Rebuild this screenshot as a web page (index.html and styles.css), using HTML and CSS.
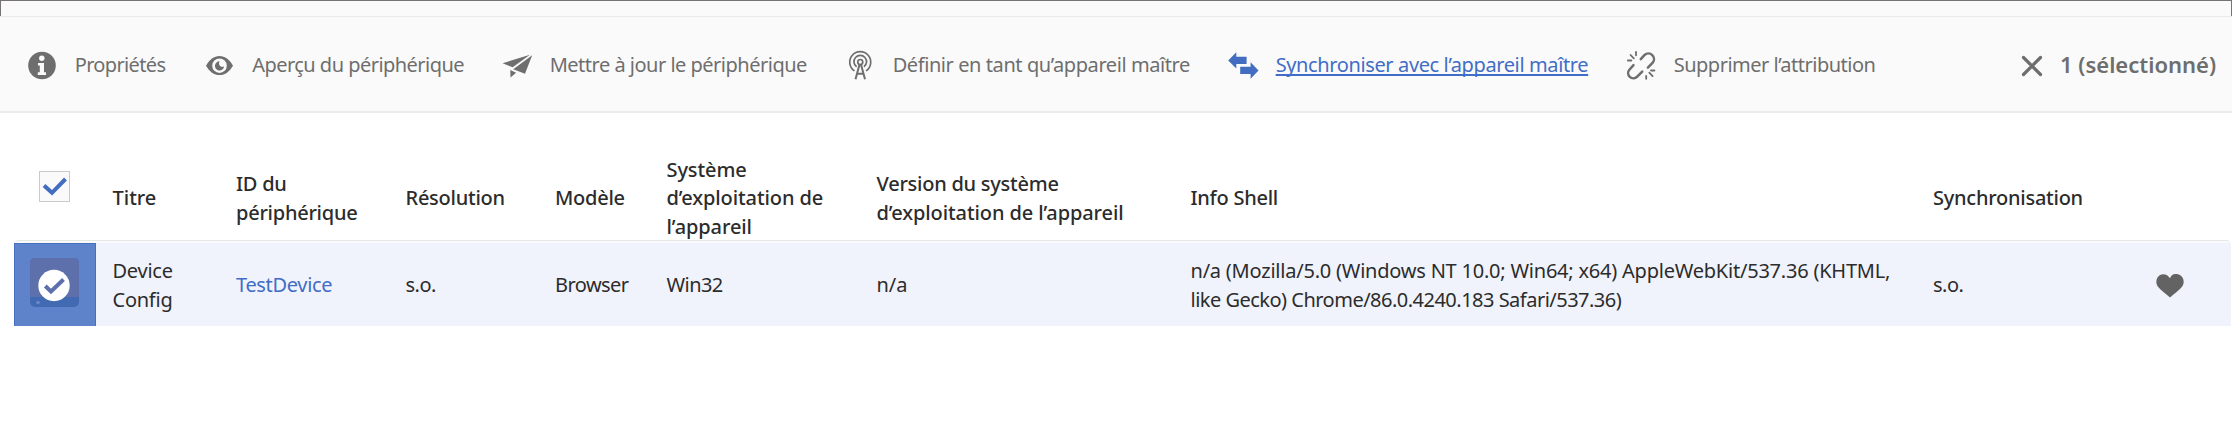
FILE: index.html
```html
<!DOCTYPE html>
<html lang="fr">
<head>
<meta charset="utf-8">
<title>Périphériques</title>
<link rel="stylesheet" href="styles.css">
</head>
<body>
<div class="top-strip"></div>
<nav class="toolbar">
  <a class="action"><svg class="icon" viewBox="28 49 32 32"><circle cx="42" cy="66.5" r="13.8"/><g fill="#fafafa"><circle cx="41.8" cy="59.3" r="2.7"/><path d="M38 64h6v9.200h2V76h-8.200v-2.800h2V66.600H38z"/></g></svg><span class="label t1">Propriétés</span></a>
  <a class="action"><svg class="icon" viewBox="205.500 49 32 32"><path fill-rule="evenodd" d="M205.500 66.700C209 60.500 213.500 57 219 57s10 3.500 13.500 9.700C229 72.700 224.500 76 219 76s-10-3.300-13.500-9.300zM219 59.400a7.300 7.300 0 1 0 0 14.600A7.300 7.300 0 0 0 219 59.400z"/><path d="M219.300 62.300a4.600 4.600 0 1 0 4.300 5.200c-2 .8-4.600-.2-5-2.300-.2-1.200.1-2.100.7-2.900z"/></svg><span class="label t2">Aperçu du périphérique</span></a>
  <a class="action"><svg class="icon" viewBox="503 49 32 32"><path d="M502.600 64.300 530 55.800l-17.300 12.400z"/><path d="M532.200 56.300 525 74.800l-11.800-4.600zM510.300 71l5.800 2.700-5.600 4.700z"/></svg><span class="label t3">Mettre à jour le périphérique</span></a>
  <a class="action"><svg class="icon" viewBox="846 49 32 32"><g fill="none" stroke="#6e6e6e" stroke-width="1.700"><path d="M854.500 71.900a10.500 10.500 0 1 1 11.500 0"/><path d="M856.600 67.800a6.300 6.300 0 1 1 7.300 0"/><circle cx="860.250" cy="63" r="2.500"/><path stroke-width="2" d="M859.500 65.500 855.500 80.300M861 65.500l4 14.800M857.300 74.800h6"/></g></svg><span class="label t4">Définir en tant qu’appareil maître</span></a>
  <a class="action active"><svg class="icon" viewBox="1229 49 32 32"><path d="M1228.200 61.500l8.100-8.200v4.400h10.300v7.300h-10.300v4.600zM1258.500 71.500l-7.900-8.200v4.400h-10.400V75h10.400v4.700z"/></svg><span class="label t5">Synchroniser avec l’appareil maître</span></a>
  <a class="action"><svg class="icon" viewBox="1627 49 32 32"><g fill="none" stroke="#6e6e6e" stroke-width="2.500" stroke-linecap="round"><path d="M1640.800 60.200l3.800-4.200a5.600 5.600 0 0 1 8.100 7.700l-4.800 4.900"/><path d="M1633.500 66.200l-3.900 4.300a5.200 5.200 0 0 0 7.600 7.200l5-5"/><g stroke-width="1.800"><path d="M1636 53v3.300M1630.600 56l3.200 3.400M1627.900 61.500h3.400M1646.200 76.800v3M1649.300 73.600l3.300 3.500M1651 71.500h3.400"/></g></g></svg><span class="label t6">Supprimer l’attribution</span></a>
  <a class="action selection"><svg class="icon" viewBox="2020 49 32 32"><path fill="none" stroke="#6e6e6e" stroke-width="3.200" stroke-linecap="round" d="M2023.500 58.500l17 17M2040.500 58.500l-17 17"/></svg><span class="label">1 (sélectionné)</span></a>
</nav>
<main class="list">
  <div class="grid head">
    <div class="check-cell"><span class="checkbox"><svg viewBox="0 0 29 29"><path fill="none" stroke="#426dc0" stroke-width="4" d="M4 13.500 12 20.800 25.500 7"/></svg></span></div>
    <div>Titre</div>
    <div class="h-id">ID du<br>périphérique</div>
    <div class="h-id">Résolution</div>
    <div class="h-id">Modèle</div>
    <div class="h-os">Système<br>d’exploitation de<br>l’appareil</div>
    <div class="h-os"><span class="h-id">Version du système</span><br>d’exploitation de l’appareil</div>
    <div class="h-id">Info Shell</div>
    <div class="h-id">Synchronisation</div>
    <div></div>
  </div>
  <div class="grid row">
    <div class="thumb"><svg viewBox="0 0 49 49"><rect width="49" height="49" rx="5" fill="#426ab3"/><path fill="#5d70ab" d="M5 0h39a5 5 0 0 1 5 5v34H0V5a5 5 0 0 1 5-5z"/><circle cx="8" cy="44.500" r="1.800" fill="#668bca"/><circle cx="24" cy="27.500" r="15.700" fill="#fff"/><path fill="none" stroke="#5d70ab" stroke-width="4" d="M15.300 28 21 33.500 33.500 21.500"/></svg></div>
    <div class="c-name">Device<br>Config</div>
    <div class="c-id"><a class="link">TestDevice</a></div>
    <div class="c-plain">s.o.</div>
    <div class="c-tight">Browser</div>
    <div class="c-tight">Win32</div>
    <div>n/a</div>
    <div><span class="ua-first">n/a (Mozilla/5.0 (Windows NT 10.0; Win64; x64) AppleWebKit/537.36 (KHTML,</span><br><span class="ua-second">like Gecko) Chrome/86.0.4240.183 Safari/537.36)</span></div>
    <div class="c-plain">s.o.</div>
    <div class="heart"><svg viewBox="0 0 28 24"><path fill="#636363" d="M14 23.600C10 19.700 4.500 16 1.800 12.400-.8 8.800.2 3.300 3.700 1.200 7.500-1 12 .8 14 4.300 16-.8 20.500-1 24.300 1.200c3.500 2.100 4.500 7.600 1.900 11.200C23.500 16 18 19.700 14 23.600z"/></svg></div>
  </div>
</main>
</body>
</html>
```
FILE: styles.css
```css
* { box-sizing: border-box; }
body {
  margin: 0;
  height: 432px;
  overflow: hidden;
  background: #fff;
  color: #2c2c2c;
  font: 20px/28.4px "Noto Sans", "Open Sans", sans-serif;
}
.top-strip {
  height: 16px;
  background: #fafafa;
  border: 1px solid #777276;
  border-bottom: 0;
}
.toolbar {
  display: grid;
  grid-template-columns: 177.5px 297.5px 343px 383px 398px 393px 1fr;
  align-items: center;
  height: 97px;
  padding: 0 0 0 28px;
  background: #fafafa;
  border-bottom: 2px solid #ececec;
  box-shadow: inset 0 2px 0 -1px #e9e9e9;
  color: #6e6e6e;
}
.action { display: flex; align-items: center; white-space: nowrap; }
.icon { flex: none; width: 32px; height: 32px; margin-right: 14.7px; fill: #6e6e6e; overflow: visible; }
.label { padding-top: 3px; }
.active { color: #426dc6; }
.active .icon { fill: #426dc0; }
.active .label { text-decoration: underline; text-decoration-thickness: 1.5px; text-underline-offset: 2px; text-decoration-skip-ink: none; }
.t1 { letter-spacing: -.65px; }
.t2 { letter-spacing: -.53px; }
.t3 { letter-spacing: -.5px; }
.t4 { letter-spacing: -.42px; }
.t5 { letter-spacing: -.38px; }
.t6 { letter-spacing: -.5px; }
.selection .icon { margin-right: 8px; }
.selection .label { padding-top: 2px; font-size: 22px; font-weight: 600; }
.list { padding: 42px 0 0 13.5px; }
.grid {
  display: grid;
  grid-template-columns: 99px 123.5px 169.5px 149.500px 111.500px 210px 314px 742.500px 212px 1fr;
  align-items: center;
  white-space: nowrap;
}
.head { height: 85px; padding-top: 1px; font-weight: 500; }
.check-cell { align-self: start; padding: 15px 0 0 25.5px; }
.checkbox { display: block; width: 31px; height: 31px; border: 1px solid #cacaca; background: #fafafa; }
.checkbox svg { display: block; width: 29px; height: 29px; }
.h-id { letter-spacing: -.25px; }
.h-os { letter-spacing: -.1px; }
.row {
  height: 86px;
  padding-top: 2px;
  margin-right: 1px;
  border-top: 1px solid #e6e6e6;
  border-radius: 5px 5px 0 0;
  background: linear-gradient(#fafafc 2px, #f0f3fb 2px);
}
.row > div:not(.thumb) { padding-top: 2px; }
.thumb { width: 82px; padding: 14px 0 0 15.5px; background: #5f83ca; border: solid #466fc0; border-width: 1px 1px 0; align-self: stretch; }
.thumb svg { display: block; width: 49px; height: 49px; }
.c-name { letter-spacing: -.25px; }
.c-id { letter-spacing: -.33px; }
.c-tight { letter-spacing: -.55px; }
.c-plain { letter-spacing: -.5px; }
.link { color: #426dc6; }
.ua-first { letter-spacing: -.22px; }
.ua-second { letter-spacing: -.51px; }
.heart { padding-left: 11px; }
.heart svg { display: block; width: 28px; height: 24px; }
```
